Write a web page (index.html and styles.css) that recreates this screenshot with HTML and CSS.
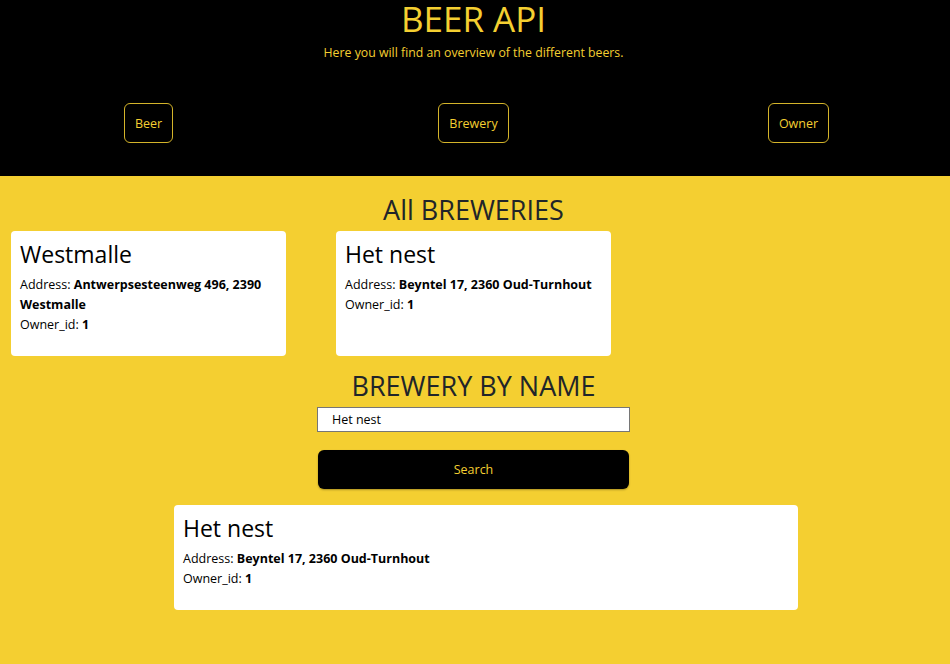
FILE: index.html
```html
<!DOCTYPE html>
<html lang="en">
<head>
<meta charset="utf-8">
<title>Beer API</title>
<link rel="stylesheet" href="styles.css">
</head>
<body>
<header class="top">
  <div class="top-inner">
    <h1 class="title">BEER API</h1>
    <p class="subtitle">Here you will find an overview of the different beers.</p>
    <nav class="nav">
      <div class="nav-cell"><button class="nav-btn">Beer</button></div>
      <div class="nav-cell"><button class="nav-btn">Brewery</button></div>
      <div class="nav-cell"><button class="nav-btn">Owner</button></div>
    </nav>
  </div>
</header>
<main class="main">
  <h2 class="section-title first">All BREWERIES</h2>
  <div class="cards">
    <div class="card">
      <h3 class="card-title">Westmalle</h3>
      <p class="card-line">Address: <b>Antwerpsesteenweg 496, 2390 Westmalle</b></p>
      <p class="card-line">Owner_id: <b>1</b></p>
    </div>
    <div class="card">
      <h3 class="card-title">Het nest</h3>
      <p class="card-line">Address: <b>Beyntel 17, 2360 Oud-Turnhout</b></p>
      <p class="card-line">Owner_id: <b>1</b></p>
    </div>
  </div>
  <h2 class="section-title second">BREWERY BY NAME</h2>
  <form class="search">
    <input class="search-input" type="text" value="Het nest">
    <button class="search-btn" type="button">Search</button>
  </form>
  <div class="result">
    <div class="card wide">
      <h3 class="card-title">Het nest</h3>
      <p class="card-line">Address: <b>Beyntel 17, 2360 Oud-Turnhout</b></p>
      <p class="card-line">Owner_id: <b>1</b></p>
    </div>
  </div>
</main>
</body>
</html>
```
FILE: styles.css
```css
* { box-sizing: border-box; }
html, body { margin: 0; padding: 0; }
body {
  font-family: "Open Sans", "Noto Sans", sans-serif;
  background: #f4cf31;
  min-height: 100vh;
}
.top {
  background: #000;
  padding: 0 0 33px;
}
.top-inner {
  width: 947px;
  text-align: center;
}
.title {
  margin: 0;
  font-size: 35px;
  line-height: 38px;
  font-weight: 500;
  color: #f4cf31;
}
.subtitle {
  margin: 5px 0 0;
  font-size: 12.3px;
  line-height: 20px;
  color: #f4cf31;
}
.nav {
  margin-top: 40px;
  display: grid;
  grid-template-columns: repeat(3, 325px);
  justify-content: center;
}
.nav-cell { display: flex; justify-content: center; }
.nav-btn {
  height: 40px;
  padding: 0 10px;
  background: transparent;
  border: 1px solid #d4b42a;
  border-radius: 6px;
  color: #f4cf31;
  font-family: inherit;
  font-size: 12.5px;
}
.main { padding-bottom: 54px; width: 947px; }
.section-title {
  margin: 0;
  text-align: center;
  font-size: 27px;
  line-height: 34px;
  font-weight: 400;
  color: #212529;
}
.section-title.first { padding-top: 17px; margin-bottom: 4px; }
.section-title.second { margin-top: 13px; margin-bottom: 4px; }
.cards {
  display: flex;
  gap: 50px;
  padding-left: 11px;
}
.card {
  width: 275px;
  background: #fff;
  border-radius: 4px;
  padding: 9px 9px 21px;
  color: #000;
}
.card.wide { width: 624px; }
.card-title {
  margin: 0 0 6px;
  font-size: 23px;
  line-height: 29px;
  font-weight: 400;
}
.card-line {
  margin: 0;
  font-size: 12.5px;
  line-height: 20px;
}
.card-line b { font-weight: 700; }
.search {
  display: flex;
  flex-direction: column;
  align-items: center;
  gap: 18px;
}
.search-input {
  width: 313px;
  height: 25px;
  border: 1px solid #767676;
  padding: 0 14px;
  font-family: inherit;
  font-size: 12.5px;
  color: #000;
  background: #fff;
  outline: none;
}
.search-btn {
  width: 311px;
  height: 39px;
  background: #000;
  border: none;
  border-radius: 6px;
  color: #f4cf31;
  font-family: inherit;
  font-size: 12.5px;
  box-shadow: 0 1px 2px rgba(0,0,0,0.3);
}
.result {
  margin-top: 16px;
  padding-left: 174px;
}
```
